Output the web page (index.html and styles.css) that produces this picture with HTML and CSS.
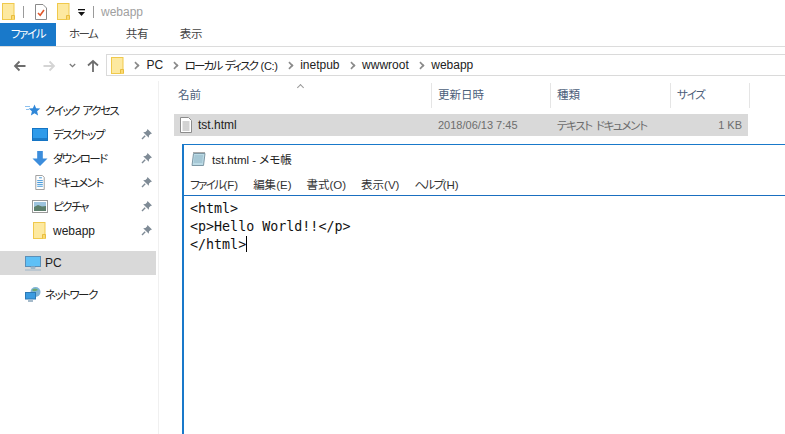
FILE: index.html
```html
<!DOCTYPE html>
<html lang="ja">
<head>
<meta charset="utf-8">
<title>webapp</title>
<link rel="stylesheet" href="styles.css">
</head>
<body>
<svg class="defs" width="0" height="0" aria-hidden="true">
  <defs>
    <symbol id="folder" viewBox="0 0 13 17">
      <rect x="0.5" y="0.5" width="11.5" height="16" fill="#fde9a0" stroke="#f0c94c"/>
      <path d="M9.5 16.5V12.5H12.5V16.5" fill="#fbd96f" stroke="#e8bd3f"/>
    </symbol>
    <symbol id="pin" viewBox="0 0 12 12">
      <path d="M6.5 1L11 5.5 9.6 6 8 7.6 7.8 9.8 2.2 4.2 4.4 4 6 2.4Z" fill="#7f8b96"/>
      <path d="M4.2 7.8L1 11" stroke="#7f8b96" stroke-width="1.4"/>
    </symbol>
  </defs>
</svg>
<div class="titlebar">
  <svg class="ic-folder-q"><use href="#folder"/></svg>
  <span class="sep"></span>
  <svg class="ic-check" viewBox="0 0 12 16"><path d="M.5 .5H8L11.5 4V15.5H.5Z" fill="#fff" stroke="#8a8a8a"/><path d="M3 9L5.2 11.2 9 6" fill="none" stroke="#e0562a" stroke-width="1.6"/></svg>
  <svg class="ic-folder-q2"><use href="#folder"/></svg>
  <svg class="ic-drop" viewBox="0 0 8 8"><rect x="0" y="0" width="7" height="1.3" fill="#111"/><path d="M0 3H7L3.5 7Z" fill="#111"/></svg>
  <span class="sep sep-2"></span>
  <span class="win-title">webapp</span>
</div>
<div class="tabs">
  <span class="tab tab-file">ファイル</span>
  <span class="tab tab-kana">ホーム</span>
  <span class="tab">共有</span>
  <span class="tab">表示</span>
</div>
<div class="addr-row">
  <svg class="nav-arrow" viewBox="0 0 13 12"><path d="M12.5 6H2M6.5 1.5L2 6l4.5 4.5" fill="none" stroke="#6d6d6d" stroke-width="1.8"/></svg>
  <svg class="nav-arrow nav-fwd" viewBox="0 0 13 12"><path d="M.5 6H11M6.5 1.5L11 6l-4.5 4.5" fill="none" stroke="#d4d4d4" stroke-width="1.8"/></svg>
  <svg class="nav-down" viewBox="0 0 7 5"><path d="M.8 1L3.5 3.6 6.2 1" fill="none" stroke="#7a7a7a" stroke-width="1.3"/></svg>
  <svg class="nav-up" viewBox="0 0 12 14"><path d="M6 13V2M1 6.5L6 2l5 4.5" fill="none" stroke="#6d6d6d" stroke-width="1.8"/></svg>
  <div class="addr">
    <svg class="addr-folder"><use href="#folder"/></svg>
    <span class="crumb-sep"></span><span class="crumb">PC</span>
    <span class="crumb-sep crumb-sep-a"></span><span class="crumb crumb-jp">ローカル ディスク <span class="crumb-drive">(C:)</span></span>
    <span class="crumb-sep"></span><span class="crumb">inetpub</span>
    <span class="crumb-sep"></span><span class="crumb">wwwroot</span>
    <span class="crumb-sep"></span><span class="crumb">webapp</span>
  </div>
</div>
<div class="main">
  <nav class="nav">
    <div class="nav-item head">
      <svg class="ni" viewBox="0 0 16 14"><path d="M9.5 1l1.6 3.8 4.2.3-3.2 2.7 1 4.1-3.6-2.2-3.6 2.2 1-4.1L3.7 5.1l4.2-.3Z" fill="#2f87d8"/><path d="M0 3h5M1 6h3" stroke="#8cc0ee"/></svg>
      <span>クイック アクセス</span>
    </div>
    <div class="nav-item sub">
      <svg class="ni" viewBox="0 0 16 13"><rect x=".5" y=".5" width="15" height="12" fill="#2f9bea" stroke="#1474c4"/><path d="M1 11h14" stroke="#0d5da6"/></svg>
      <span class="lbl">デスクトップ</span><svg class="pin"><use href="#pin"/></svg>
    </div>
    <div class="nav-item sub">
      <svg class="ni" viewBox="0 0 16 16"><path d="M5 0h6v8h5l-8 8-8-8h5Z" fill="#3c8ddc"/></svg>
      <span class="lbl">ダウンロード</span><svg class="pin"><use href="#pin"/></svg>
    </div>
    <div class="nav-item sub">
      <svg class="ni" viewBox="0 0 16 16"><path d="M3.5.5h7l2 2v13h-9Z" fill="#fff" stroke="#9a9a9a"/><path d="M7 3h3M5 6h6M5 8h6M5 10h6M5 12h6" stroke="#3d94d8"/></svg>
      <span class="lbl">ドキュメント</span><svg class="pin"><use href="#pin"/></svg>
    </div>
    <div class="nav-item sub">
      <svg class="ni" viewBox="0 0 16 13"><rect x=".5" y=".5" width="15" height="12" fill="#fff" stroke="#9a9a9a"/><rect x="2" y="2" width="12" height="5" fill="#9dc4de"/><path d="M2 7l4-2 4 1.5 4-.5v5H2Z" fill="#5c7f6c"/></svg>
      <span class="lbl">ピクチャ</span><svg class="pin"><use href="#pin"/></svg>
    </div>
    <div class="nav-item sub">
      <svg class="ni ni-f"><use href="#folder"/></svg>
      <span class="lbl lbl-latin lbl-low">webapp</span><svg class="pin"><use href="#pin"/></svg>
    </div>
    <div class="nav-item head pc">
      <svg class="ni" viewBox="0 0 16 15"><rect x=".5" y=".5" width="15" height="10" fill="#5ec0f6" stroke="#5a8fb8"/><path d="M6 11h4v1.5H6ZM0 14h16" stroke="#9db6c9" fill="#9db6c9"/></svg>
      <span class="lbl-latin">PC</span>
    </div>
    <div class="nav-item head net">
      <svg class="ni" viewBox="0 0 16 15"><circle cx="10.5" cy="5" r="5" fill="#7fb4d6"/><path d="M7 3c2-2 5-1 6 0-2 1-4 2-6 0Z" fill="#6fa86a"/><rect x=".5" y="5.5" width="10" height="6.5" fill="#3b9be0" stroke="#2c79b5"/><path d="M3 14h5" stroke="#7f9db3" stroke-width="1.4"/></svg>
      <span>ネットワーク</span>
    </div>
  </nav>
  <section class="files">
    <span class="sort-caret"></span>
    <div class="col-heads">
      <span class="col col-name">名前</span>
      <span class="col col-date">更新日時</span>
      <span class="col col-type">種類</span>
      <span class="col col-size">サイズ</span>
    </div>
    <div class="file-row">
      <span class="file-name">
        <svg class="doc" viewBox="0 0 12 16"><path d="M.5.5h8l3 3v12H.5Z" fill="#fff" stroke="#8c8c8c"/><path d="M2.5 5h7M2.5 7h7M2.5 9h7M2.5 11h7M2.5 13h7" stroke="#a6a6a6"/></svg>
        tst.html
      </span>
      <span class="cell cell-date">2018/06/13 7:45</span>
      <span class="cell cell-type">テキスト ドキュメント</span>
      <span class="cell cell-size">1 KB</span>
    </div>
  </section>
  <div class="notepad">
    <div class="np-title">
      <svg class="np-icon" viewBox="0 0 15 15"><path d="M2.5 1.5H14L12.5 13.5H1Z" fill="#bcdbe6" stroke="#7d97a4"/><path d="M3 1V0M5 1V0M7 1V0M9 1V0M11 1V0M13 1V0" stroke="#555"/><path d="M3.5 4h8.5M3.2 6h8.5M3 8h8.5M2.8 10h8.5" stroke="#8fb4c4"/></svg>
      <span>tst.html - メモ帳</span>
    </div>
    <div class="np-menu">
      <span class="np-kana">ファイル<span class="np-key">(F)</span></span><span>編集<span class="np-key">(E)</span></span><span>書式<span class="np-key">(O)</span></span><span>表示<span class="np-key">(V)</span></span><span class="np-kana">ヘルプ<span class="np-key">(H)</span></span>
    </div>
    <div class="np-text">
      <div>&lt;html&gt;</div>
      <div>&lt;p&gt;Hello World!!&lt;/p&gt;</div>
      <div>&lt;/html&gt;<span class="caret"></span></div>
    </div>
  </div>
</div>
</body>
</html>
```
FILE: styles.css
```css
* { box-sizing: border-box; }
html, body { margin: 0; height: 100%; }
body {
  width: 785px; height: 434px; overflow: hidden; background: #fff; position: relative;
  font-family: "Liberation Sans", "Noto Sans CJK JP", sans-serif;
  font-size: 12px; color: #1a1a1a;
  font-feature-settings: "palt";
}
.defs { position: absolute; }
.titlebar { height: 23px; display: flex; align-items: center; }
.ic-folder-q { width: 13px; height: 17px; margin-left: 2px; }
.sep { width: 1px; height: 12px; background: #9a9a9a; margin-left: 8px; }
.ic-check { width: 12px; height: 16px; margin-left: 11px; }
.ic-folder-q2 { width: 13px; height: 17px; margin-left: 10px; }
.ic-drop { width: 8px; height: 8px; margin-left: 8px; margin-top: 3px; }
.sep-2 { margin-left: 7px; }
.win-title { color: #a0a0a0; font-size: 12px; margin-left: 7px; }
.tabs { height: 24px; display: flex; border-bottom: 1px solid #dcdcdc; }
.tab { width: 54px; text-align: center; line-height: 22px; color: #444; font-size: 11.5px; letter-spacing: -.3px; }
.tab-file { width: 56px; background: #1979ca; color: #fff; height: 23px; letter-spacing: -1.4px; }
.tab-kana { letter-spacing: -1.6px; }
.addr-row { height: 34px; display: flex; align-items: center; padding: 3px 0 0 13px; }
.nav-arrow { width: 13px; height: 12px; flex: none; }
.nav-fwd { margin-left: 17px; }
.nav-down { width: 7px; height: 5px; margin-left: 13px; flex: none; }
.nav-up { width: 12px; height: 14px; margin-left: 11px; flex: none; }
.addr {
  flex: 1; margin-left: 7px; align-self: flex-start; margin-top: 4px; height: 22px;
  border: 1px solid #dadada; border-right: 0; display: flex; align-items: center;
  font-size: 12px; color: #222; padding-left: 4px; white-space: nowrap;
}
.addr-folder { width: 13px; height: 17px; flex: none; }
.crumb-sep { width: 22.5px; flex: none; position: relative; }
.crumb-sep-a { width: 21.5px; }
.crumb-sep::after {
  content: ""; position: absolute; left: 8px; top: -3px; width: 5px; height: 5px;
  border-right: 2px solid #8a8a8a; border-top: 2px solid #8a8a8a; transform: rotate(45deg) scale(.8);
}
.crumb-jp { font-size: 11.5px; letter-spacing: -1.8px; word-spacing: 2px; }
.crumb-drive { font-size: 11px; letter-spacing: -.3px; }
.main { display: flex; position: relative; height: 353px; }
.nav { width: 159px; border-right: 1px solid #f0f0f0; padding-top: 17px; flex: none; }
.nav-item { display: flex; align-items: center; height: 24px; font-size: 11.5px; color: #222; letter-spacing: -1.5px; word-spacing: 2px; }
.head .ni { margin-left: 25px; margin-right: 4px; width: 16px; height: 15px; }
.sub .ni { margin-left: 32px; margin-right: 5px; width: 16px; height: 15px; }
.sub .ni-f { width: 13px; height: 17px; margin-left: 33px; margin-right: 7px; }
.lbl { flex: 1; }
.lbl-latin { font-size: 12px; letter-spacing: 0; }
.lbl-low { padding-top: 2px; }
.pin { width: 12px; height: 12px; margin-right: 5px; }
.pc { background: #d9d9d9; margin-top: 9px; width: 156px; }
.net { margin-top: 7px; }
.files { flex: 1; position: relative; padding: 2px 0 0 15px; }
.sort-caret {
  position: absolute; left: 139px; top: 4px; width: 5px; height: 5px;
  border-left: 1px solid #999; border-top: 1px solid #999; transform: rotate(45deg);
}
.col-heads { display: flex; height: 25px; color: #4c607a; font-size: 11.5px; }
.col { height: 25px; line-height: 24px; border-right: 1px solid #e5e5e5; padding-left: 6px; }
.col-name { width: 258px; padding-left: 4px; }
.col-date { width: 119px; }
.col-type { width: 120px; }
.col-size { width: 79px; letter-spacing: -1.2px; }
.file-row { display: flex; height: 22px; background: #d9d9d9; margin-top: 6px; width: 574px; align-items: center; font-size: 11.5px; color: #6d6d6d; white-space: nowrap; }
.file-name { width: 258px; display: flex; align-items: center; gap: 6px; color: #222; padding-left: 6px; font-size: 12px; }
.doc { width: 12px; height: 16px; }
.cell-date { width: 119px; padding-left: 6px; font-size: 11px; }
.cell-type { width: 120px; padding-left: 6px; letter-spacing: -1.3px; word-spacing: 2px; }
.cell-size { flex: 1; text-align: right; padding-right: 6px; font-size: 11px; }
.notepad {
  position: absolute; left: 182px; top: 63px; width: 620px; height: 300px; background: #fff;
  border: 1px solid #1979ca; border-left-width: 2px; border-bottom: 0;
}
.np-title { height: 28px; display: flex; align-items: center; gap: 6px; padding-left: 7px; font-size: 11.5px; color: #222; }
.np-icon { width: 15px; height: 15px; }
.np-menu { height: 23px; display: flex; gap: 15px; align-items: center; padding-left: 6px; font-size: 11.5px; color: #333; border-bottom: 1px solid #1a6fc0; }
.np-kana { letter-spacing: -1.6px; }
.np-key { letter-spacing: 0; }
.np-text { font-family: "DejaVu Sans Mono", monospace; font-size: 13.33px; line-height: 18px; padding: 4px 0 0 6px; color: #111; font-feature-settings: normal; }
.caret { display: inline-block; width: 1px; height: 16px; background: #000; vertical-align: -3px; }
```
